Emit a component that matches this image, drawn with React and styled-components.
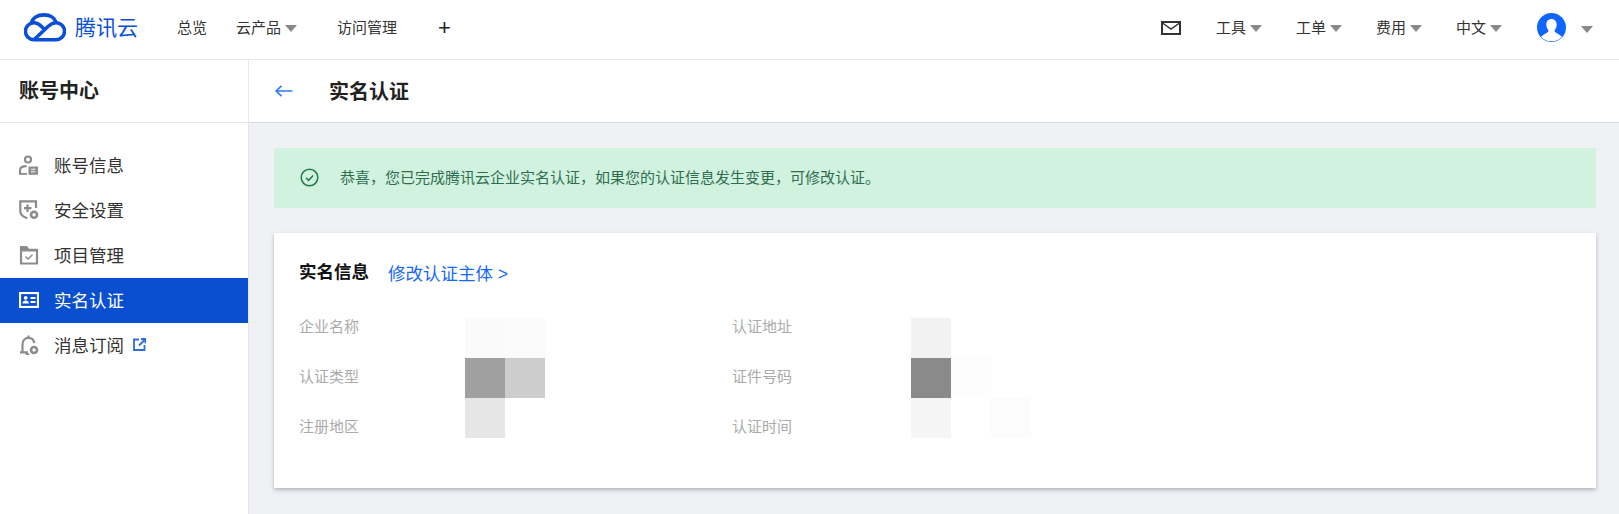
import React from 'react';
import styled, { createGlobalStyle } from 'styled-components';

const Global = createGlobalStyle`
    html, body {
        margin: 0;
        padding: 0;
        background: #fff;
        font-family: "Liberation Sans", "Noto Sans CJK SC", sans-serif;
    }
    * {
        box-sizing: border-box;
    }
`;

const topLeft = [
    { label: '总览', width: 59 },
    { label: '云产品', width: 101, caret: true },
    { label: '访问管理', width: 101 },
];
const topRight = ['工具', '工单', '费用', '中文'];

const menu = [
    { label: '账号信息', icon: 'user' },
    { label: '安全设置', icon: 'shield' },
    { label: '项目管理', icon: 'folder' },
    { label: '实名认证', icon: 'card', active: true },
    { label: '消息订阅', icon: 'bell', external: true },
];

const leftLabels = ['企业名称', '认证类型', '注册地区'];
const rightLabels = ['认证地址', '证件号码', '认证时间'];

// mosaic colours, row by row
const leftMosaic = ['#fafafa', '#fbfbfb', '#a0a0a0', '#cdcdcd', '#e6e6e6', '#fff'];
const rightMosaic = [
    '#f2f2f2', '#fff', '#fff',
    '#8a8a8a', '#fdfdfd', '#fff',
    '#f5f5f5', '#fff', '#fcfcfc',
];

function Logo() {
    return (
        <svg width="42" height="29" viewBox="0 0 42 29" fill="none" stroke="#0b4fd6" strokeWidth="3.600">
            <path d="M10 26.800L24 13.500C27 10.800 29 9.700 32 9.700a8.550 8.550 0 0 1 0 17.100H10a8.550 8.550 0 1 1 0-17.100c3 0 5 1.300 7.300 3.600l3 3" />
            <path d="M7.500 10C8.500 5 13.500 1.900 20 1.900c6 0 11 3.100 12.300 7.800" />
        </svg>
    );
}

function MailIcon() {
    return (
        <svg width="20" height="14" viewBox="0 0 20 14" fill="none" stroke="#333" strokeWidth="2">
            <rect x="1" y="1" width="18" height="12" />
            <path d="M1.500 2l8.500 6 8.500-6" strokeWidth="1.500" />
        </svg>
    );
}

function Avatar() {
    return (
        <svg width="29" height="29" viewBox="0 0 29 29">
            <circle cx="14.500" cy="14.500" r="14.500" fill="#0f66ff" />
            <path
                d="M14.500 6c3.200 0 5.200 2.400 5.200 5.700 0 2.200-.9 4-2 5.200v1.500c0 1 4.300 2.300 7.300 5.400a14.500 14.500 0 0 1-21 0c3-3.100 7.300-4.400 7.300-5.400v-1.500c-1.100-1.200-2-3-2-5.200 0-3.300 2-5.700 5.200-5.700z"
                fill="#fff"
            />
        </svg>
    );
}

function MenuIcon({ name, color }) {
    const line = { fill: 'none', stroke: color, strokeWidth: 2.200 };
    if (name === 'user') {
        return (
            <svg width="20" height="20" viewBox="0 0 20 20">
                <circle cx="9" cy="4.500" r="3" {...line} />
                <path d="M1.100 18.500v-3.500c0-2.200 2.500-3.800 6.500-3.800" {...line} />
                <path d="M0 18h8v1.800H0z" fill={color} />
                <rect x="9.500" y="11.500" width="9.500" height="8.300" fill={color} />
                <path d="M12 14.300h4.500M12 16.800h4.500" stroke="#fff" strokeWidth="1.100" />
            </svg>
        );
    }
    if (name === 'shield') {
        return (
            <svg width="20" height="20" viewBox="0 0 20 20">
                <path d="M17 8V1.300H1.300v10c0 3.200 3 5.700 7 7" {...line} />
                <path d="M8.500 4.500v7.500M5 8.200h7.500" {...line} />
                <circle cx="15" cy="14.800" r="3" {...line} strokeWidth="2.600" />
            </svg>
        );
    }
    if (name === 'folder') {
        return (
            <svg width="20" height="20" viewBox="0 0 20 20">
                <path d="M1 1h7l2 2.800h8.500V6.500H1z" fill={color} />
                <path d="M2 3v15.500h16V4" {...line} />
                <path d="M6.500 11.500l2.500 2.500 4.500-4.300" {...line} strokeWidth="1.500" />
            </svg>
        );
    }
    if (name === 'card') {
        return (
            <svg width="20" height="16" viewBox="0 0 20 16">
                <rect x="1" y="1" width="18" height="14" {...line} />
                <circle cx="6.700" cy="5.800" r="1.900" fill={color} />
                <path d="M3.500 11.500c0-2 1.300-3 3.200-3s3.200 1 3.200 3z" fill={color} />
                <path d="M11.500 6h5M11.500 10h5" stroke={color} strokeWidth="2" />
            </svg>
        );
    }
    return (
        <svg width="20" height="20" viewBox="0 0 20 20">
            <path
                d="M9.500 .5v2.300M3.500 17v-7.500c0-3.800 2.500-6.700 6-6.700 3 0 5.300 2.200 5.800 5.200M1 17.300h8M6.500 19.500h4"
                {...line}
            />
            <circle cx="15" cy="15" r="3" {...line} strokeWidth="2.600" />
        </svg>
    );
}

function ExternalIcon() {
    return (
        <svg width="13" height="13" viewBox="0 0 13 13" fill="none" stroke="#2f6be0" strokeWidth="1.800">
            <path d="M6 1.500H1v10.500h10.500V7" />
            <path d="M6 7.500L12 1.500M8 1h4.500v4.500" />
        </svg>
    );
}

function CheckCircle() {
    return (
        <svg width="19" height="19" viewBox="0 0 19 19" fill="none" stroke="#1f7a52" strokeWidth="1.500">
            <circle cx="9.500" cy="9.500" r="8.300" />
            <path d="M6 9.700l2.600 2.600 4.500-4.800" />
        </svg>
    );
}

function BackArrow() {
    return (
        <svg width="18" height="12" viewBox="0 0 18 12" fill="none" stroke="#2f7bff" strokeWidth="1.700">
            <path d="M1 6h16.500M6.500 .8L1.200 6l5.300 5.200" />
        </svg>
    );
}

function App() {
    return (
        <Page>
            <Global />
            <TopBar>
                <LogoBox>
                    <Logo />
                    <LogoText>腾讯云</LogoText>
                </LogoBox>
                {topLeft.map((item) => (
                    <TopItem key={item.label} $width={item.width}>
                        {item.label}
                        {item.caret && <Caret />}
                    </TopItem>
                ))}
                <Plus>+</Plus>
                <Spacer />
                <MailBox>
                    <MailIcon />
                </MailBox>
                {topRight.map((label) => (
                    <TopItem key={label} $width={80}>
                        {label}
                        <Caret />
                    </TopItem>
                ))}
                <AvatarBox>
                    <Avatar />
                    <Caret />
                </AvatarBox>
            </TopBar>
            <Body>
                <Sidebar>
                    <SideTitle>账号中心</SideTitle>
                    <Menu>
                        {menu.map((item) => (
                            <MenuItem key={item.label} $active={item.active}>
                                <IconBox>
                                    <MenuIcon name={item.icon} color={item.active ? '#fff' : '#8c8c8c'} />
                                </IconBox>
                                {item.label}
                                {item.external && (
                                    <ExternalBox>
                                        <ExternalIcon />
                                    </ExternalBox>
                                )}
                            </MenuItem>
                        ))}
                    </Menu>
                </Sidebar>
                <Main>
                    <PageHead>
                        <BackArrow />
                        <PageTitle>实名认证</PageTitle>
                    </PageHead>
                    <Content>
                        <Banner>
                            <CheckCircle />
                            <BannerText>
                                恭喜，您已完成腾讯云企业实名认证，如果您的认证信息发生变更，可修改认证。
                            </BannerText>
                        </Banner>
                        <Card>
                            <CardHead>
                                <CardTitle>实名信息</CardTitle>
                                <CardLink>修改认证主体 &gt;</CardLink>
                            </CardHead>
                            <Info>
                                <InfoGroup $width={433}>
                                    <Labels $width={166}>
                                        {leftLabels.map((text) => (
                                            <Label key={text}>{text}</Label>
                                        ))}
                                    </Labels>
                                    <Mosaic $cols={2}>
                                        {leftMosaic.map((color, i) => (
                                            <Cell key={i} $color={color} />
                                        ))}
                                    </Mosaic>
                                </InfoGroup>
                                <InfoGroup>
                                    <Labels $width={179}>
                                        {rightLabels.map((text) => (
                                            <Label key={text}>{text}</Label>
                                        ))}
                                    </Labels>
                                    <Mosaic $cols={3}>
                                        {rightMosaic.map((color, i) => (
                                            <Cell key={i} $color={color} />
                                        ))}
                                    </Mosaic>
                                </InfoGroup>
                            </Info>
                        </Card>
                    </Content>
                </Main>
            </Body>
        </Page>
    );
}

const Page = styled.div`
    width: 1619px;
    height: 514px;
    display: flex;
    flex-direction: column;
    overflow: hidden;
    color: #333;
`;
const TopBar = styled.header`
    height: 60px;
    flex: none;
    display: flex;
    align-items: center;
    background: #fff;
    border-bottom: 1px solid #e6e7ee;
    padding-bottom: 5px;
    font-size: 15px;
`;
const LogoBox = styled.div`
    width: 177px;
    padding-left: 24px;
    display: flex;
    align-items: center;
    gap: 9px;
`;
const LogoText = styled.span`
    font-size: 21px;
    color: #0b4fd6;
    line-height: 1;
`;
const TopItem = styled.div`
    width: ${(props) => props.$width}px;
    padding-bottom: 2px;
    display: flex;
    align-items: center;
    gap: 4px;
    color: #333;
`;
const Caret = styled.i`
    display: block;
    width: 0;
    height: 0;
    margin-top: 4px;
    border-left: 6px solid transparent;
    border-right: 6px solid transparent;
    border-top: 7px solid #888;
`;
const Plus = styled.div`
    font-size: 22px;
    line-height: 1;
    margin-top: 2px;
    color: #222;
`;
const Spacer = styled.div`
    flex: 1;
`;
const MailBox = styled.div`
    width: 55px;
    display: flex;
    margin-top: 2px;
`;
const AvatarBox = styled.div`
    width: 83px;
    padding-left: 1px;
    display: flex;
    align-items: center;
    gap: 15px;
`;
const Body = styled.div`
    flex: 1;
    display: flex;
    min-height: 0;
`;
const Sidebar = styled.aside`
    width: 249px;
    flex: none;
    background: #fff;
    border-right: 1px solid #e6e7ee;
`;
const SideTitle = styled.div`
    height: 63px;
    padding-left: 19px;
    padding-bottom: 3px;
    display: flex;
    align-items: center;
    border-bottom: 1px solid #e6e7ee;
    font-size: 20px;
    font-weight: 700;
    color: #222;
`;
const Menu = styled.nav`
    padding-top: 20px;
`;
const MenuItem = styled.div`
    height: 45px;
    padding-left: 19px;
    padding-bottom: 3px;
    display: flex;
    align-items: center;
    font-size: 17.500px;
    background: ${(props) => (props.$active ? '#0b4fd1' : 'transparent')};
    color: ${(props) => (props.$active ? '#fff' : '#333')};
`;
const IconBox = styled.span`
    width: 35px;
    padding-top: 2px;
    display: flex;
`;
const ExternalBox = styled.span`
    display: flex;
    margin-left: 9px;
`;
const Main = styled.main`
    flex: 1;
    min-width: 0;
    display: flex;
    flex-direction: column;
    background: #f0f1f5;
`;
const PageHead = styled.div`
    height: 63px;
    flex: none;
    padding-left: 26px;
    padding-bottom: 1px;
    display: flex;
    align-items: center;
    gap: 36px;
    background: #fff;
    border-bottom: 1px solid #d8dae2;
`;
const PageTitle = styled.h1`
    margin: 0;
    font-size: 20px;
    font-weight: 700;
    color: #222;
`;
const Content = styled.div`
    padding: 25px 23px 0 25px;
    display: flex;
    flex-direction: column;
    gap: 25px;
`;
const Banner = styled.div`
    height: 60px;
    padding-left: 26px;
    padding-bottom: 2px;
    display: flex;
    align-items: center;
    gap: 21px;
    background: #d2f2e0;
`;
const BannerText = styled.span`
    font-size: 15px;
    margin-bottom: 2px;
    color: #2e6e50;
`;
const Card = styled.section`
    height: 255px;
    padding: 25px 25px 0;
    background: #fff;
    box-shadow: 0 2px 4px rgba(54, 58, 80, 0.32);
`;
const CardHead = styled.div`
    display: flex;
    align-items: center;
    gap: 19px;
`;
const CardTitle = styled.div`
    font-size: 17.500px;
    font-weight: 700;
    color: #111;
    margin-top: -2px;
`;
const CardLink = styled.a`
    font-size: 17.500px;
    margin-top: 2px;
    color: #1668f5;
`;
const Info = styled.div`
    display: flex;
    margin-top: 15px;
`;
const InfoGroup = styled.div`
    display: flex;
    width: ${(props) => (props.$width ? `${props.$width}px` : 'auto')};
`;
const Labels = styled.div`
    width: ${(props) => props.$width}px;
`;
const Label = styled.div`
    height: 50px;
    display: flex;
    align-items: center;
    font-size: 15px;
    color: #aaa;
`;
const Mosaic = styled.div`
    display: grid;
    align-self: flex-start;
    margin-top: 18px;
    grid-template-columns: repeat(${(props) => props.$cols}, 40px);
    grid-auto-rows: 40px;
`;
const Cell = styled.div`
    background: ${(props) => props.$color};
`;

export default App;
